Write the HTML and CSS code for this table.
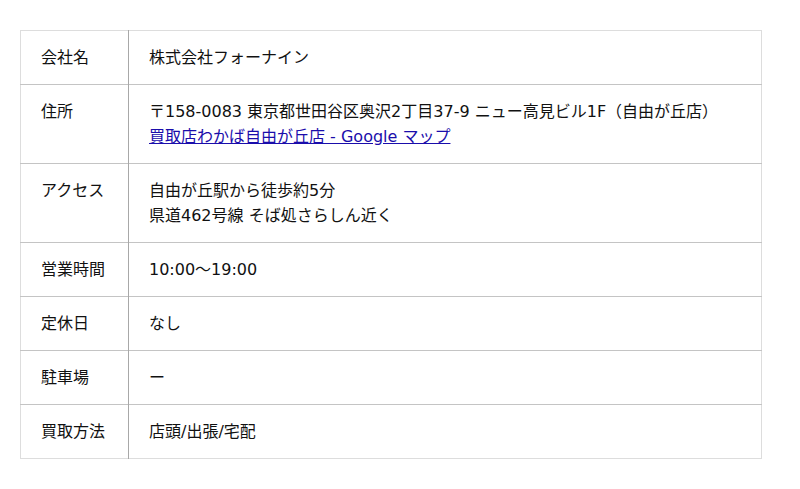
FILE: index.html
```html
<!DOCTYPE html>
<html lang="ja">
<head>
<meta charset="utf-8">
<link rel="stylesheet" href="styles.css">
</head>
<body>
<table class="info">
  <tr><th>会社名</th><td>株式会社フォーナイン</td></tr>
  <tr><th>住所</th><td>〒158-0083 東京都世田谷区奥沢2丁目37-9 ニュー高見ビル1F（自由が丘店）<br><a href="#">買取店わかば自由が丘店 - Google マップ</a></td></tr>
  <tr><th>アクセス</th><td>自由が丘駅から徒歩約5分<br>県道462号線 そば処さらしん近く</td></tr>
  <tr><th>営業時間</th><td>10:00～19:00</td></tr>
  <tr><th>定休日</th><td>なし</td></tr>
  <tr><th>駐車場</th><td>ー</td></tr>
  <tr><th>買取方法</th><td>店頭/出張/宅配</td></tr>
</table>
</body>
</html>
```
FILE: styles.css
```css
html, body { margin: 0; padding: 0; background: #fff; }
body { padding: 30px 20px; font-family: "DejaVu Sans", "Noto Sans CJK JP", sans-serif; font-size: 16px; color: #111; }
.info { width: 742px; border-collapse: collapse; border: 1px solid #ddd; }
.info th, .info td { text-align: left; vertical-align: top; font-weight: normal; padding: 14px 20px; line-height: 25px; border-top: 1px solid #c4c4c4; }
.info tr:first-child th, .info tr:first-child td { border-top: 1px solid #ddd; }
.info th { width: 67px; border-right: 1px solid #a8a8a8; }
.info a { color: #1a0dab; }
```
